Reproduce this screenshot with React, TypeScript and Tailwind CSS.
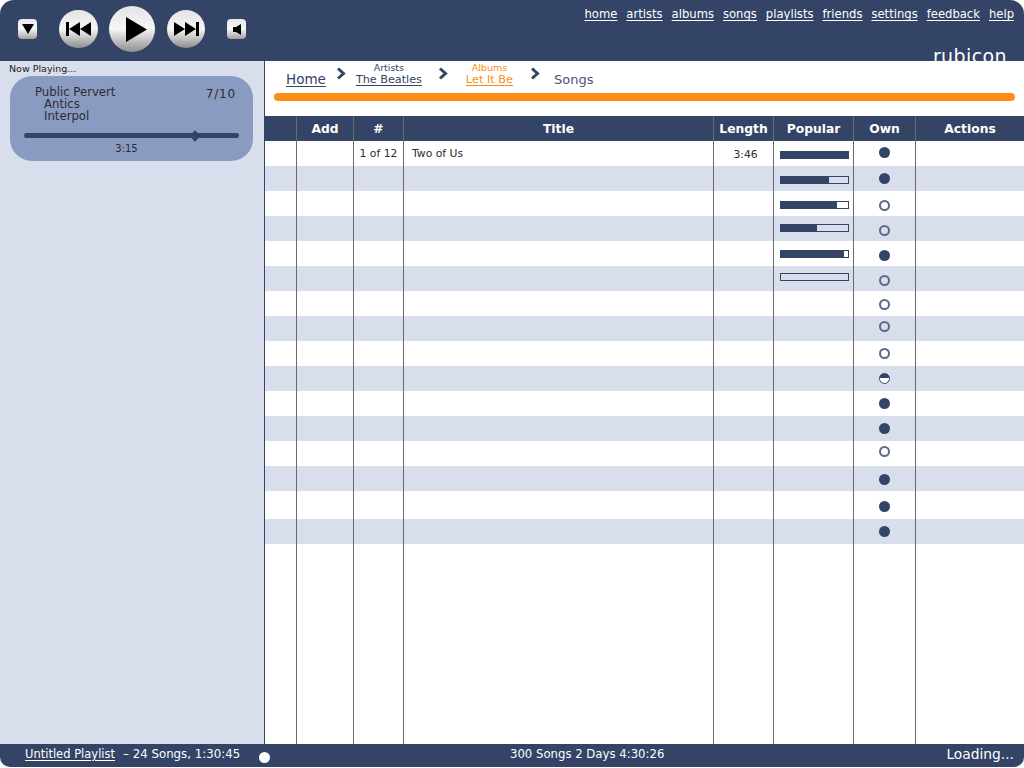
const navLinks = ["home", "artists", "albums", "songs", "playlists", "friends", "settings", "feedback", "help"];

const columns = ["", "Add", "#", "Title", "Length", "Popular", "Own", "Actions"];

const gridCols = "grid grid-cols-[32px_57px_50px_310px_60px_80px_62px_1fr]";

// dot = distance of the dot's top from the top of the row, rows aren't quite even in the original
const rows: { own: "full" | "empty" | "half"; dot: number; bar?: number; barTop?: number; h?: number }[] = [
  { own: "full", dot: 6, bar: 69, barTop: 10 },
  { own: "full", dot: 7, bar: 48, barTop: 10 },
  { own: "empty", dot: 9, bar: 56, barTop: 10 },
  { own: "empty", dot: 9, bar: 36, barTop: 8 },
  { own: "full", dot: 9, bar: 63, barTop: 9 },
  { own: "empty", dot: 9, bar: 0, barTop: 7 },
  { own: "empty", dot: 8 },
  { own: "empty", dot: 5 },
  { own: "empty", dot: 7 },
  { own: "half", dot: 7 },
  { own: "full", dot: 7 },
  { own: "full", dot: 7 },
  { own: "empty", dot: 5 },
  { own: "full", dot: 8 },
  { own: "full", dot: 10, h: 28 },
  { own: "full", dot: 7 },
];

function Circle({ size, children }: { size: string; children: React.ReactNode }) {
  return (
    <div className={`${size} flex items-center justify-center rounded-full bg-gradient-to-b from-[#e4e4e4] via-[#f6f6f6] to-[#8f8f8f]`}>
      {children}
    </div>
  );
}

function Square({ children }: { children: React.ReactNode }) {
  return (
    <div className="w-[19px] h-[20px] flex items-center justify-center rounded-[4px] bg-gradient-to-b from-[#e8e8e8] via-[#f6f6f6] to-[#a0a0a0]">
      {children}
    </div>
  );
}

function Chevron() {
  return (
    <svg width="10" height="13" viewBox="0 0 10 13" className="shrink-0">
      <path d="M2 1.5 L7.5 6.5 L2 11.5" fill="none" stroke="#334466" strokeWidth="3" />
    </svg>
  );
}

function OwnDot({ kind }: { kind: "full" | "empty" | "half" }) {
  if (kind === "full") return <div className="w-[11px] h-[11px] rounded-full bg-[#334466]" />;
  if (kind === "half")
    return <div className="w-[11px] h-[11px] rounded-full border border-[#334466] bg-[linear-gradient(#334466_50%,#ffffff_50%)]" />;
  return <div className="w-[11px] h-[11px] rounded-full border-2 border-[#5b6a8a]" />;
}

export default function App() {
  return (
    <div className="h-screen flex flex-col bg-white pb-[1px] font-['DejaVu_Sans',sans-serif] overflow-hidden">
      <header className="h-[61px] shrink-0 flex bg-[#334466] rounded-t-[14px] overflow-hidden">
        <div className="flex items-center pl-[18px] pb-[3px]">
          <Square>
            <svg width="12" height="10" viewBox="0 0 12 10"><polygon points="0,0 12,0 6,10" fill="#000" /></svg>
          </Square>
          <div className="ml-[22px]">
            <Circle size="w-[39px] h-[38px]">
              <svg width="25" height="14" viewBox="0 0 25 14">
                <rect x="0" y="0" width="3" height="14" />
                <polygon points="3,7 14,0 14,14" />
                <polygon points="14,7 25,0 25,14" />
              </svg>
            </Circle>
          </div>
          <div className="ml-[11px]">
            <Circle size="w-[46px] h-[46px]">
              <svg width="21" height="25" viewBox="0 0 21 25" className="ml-[8px]"><polygon points="0,0 21,12.5 0,25" /></svg>
            </Circle>
          </div>
          <div className="ml-[12px]">
            <Circle size="w-[38px] h-[38px]">
              <svg width="25" height="14" viewBox="0 0 25 14">
                <polygon points="0,0 11,7 0,14" />
                <polygon points="11,0 22,7 11,14" />
                <rect x="22" y="0" width="3" height="14" />
              </svg>
            </Circle>
          </div>
          <div className="ml-[22px]">
            <Square>
              <svg width="8" height="11" viewBox="0 0 8 11"><polygon points="0,3 3,3 8,0 8,11 3,8 0,8" /></svg>
            </Square>
          </div>
        </div>
        <div className="ml-auto flex flex-col items-end pr-[10px] pt-[6px]">
          <nav className="flex gap-[9px] text-[11.6px] leading-[16px] text-white">
            {navLinks.map((link) => (
              <a key={link} className="underline underline-offset-2">{link}</a>
            ))}
          </nav>
          <div className="mt-[22px] pr-[7px] text-[19px] tracking-[0.4px] leading-[24px] text-white">rubicon</div>
        </div>
      </header>

      <div className="flex-1 min-h-0 flex">
        <aside className="w-[265px] shrink-0 bg-[#d8deeb] border-r border-[#334466] pl-[10px] pr-[11px]">
          <div className="ml-[-1px] text-[9.5px] leading-[14px] pt-[1px] text-[#222]">Now Playing...</div>
          <div className="h-[85px] w-[243px] rounded-[22px] bg-[#8a9bc2] px-[14px] pt-[10px] text-[#2c2c2c]">
            <div className="flex justify-between pl-[11px] pr-[3px]">
              <div className="text-[11.7px] leading-[12px]">
                <div>Public Pervert</div>
                <div className="pl-[9px]">Antics</div>
                <div className="pl-[9px]">Interpol</div>
              </div>
              <div className="text-[12px] leading-[12px] tracking-[0.8px] pt-[2px]">7/10</div>
            </div>
            <div className="relative mt-[11px] h-[5px] rounded-full bg-[#334466]">
              <div className="absolute left-[167px] top-[-1.5px] w-[8px] h-[8px] rotate-45 bg-[#334466]" />
            </div>
            <div className="mt-[4px] pr-[10px] text-center text-[10px] leading-[14px]">3:15</div>
          </div>
        </aside>

        <main className="flex-1 min-w-0 flex flex-col">
          <div className="h-[55px] shrink-0 pl-[9px] pr-[9px]">
            <div className="h-[32px] flex pl-[12px] text-[#334466]">
              <a className="mt-[10px] text-[13.5px] leading-[16px] underline underline-offset-2">Home</a>
              <div className="ml-[10px] mt-[6px]"><Chevron /></div>
              <div className="ml-[10px] mt-[1px] flex flex-col items-center">
                <span className="text-[9.5px] leading-[11px]">Artists</span>
                <a className="text-[11.2px] leading-[14px] underline underline-offset-2">The Beatles</a>
              </div>
              <div className="ml-[16px] mt-[6px]"><Chevron /></div>
              <div className="ml-[18px] mt-[1px] flex flex-col items-center text-[#ff8c14]">
                <span className="text-[9.5px] leading-[11px]">Albums</span>
                <a className="text-[11.3px] leading-[14px] underline underline-offset-2">Let It Be</a>
              </div>
              <div className="ml-[17px] mt-[6px]"><Chevron /></div>
              <span className="ml-[14px] mt-[11px] text-[13px] leading-[16px] text-[#445577]">Songs</span>
            </div>
            <div className="h-[8px] rounded-full bg-[#ff8c14]" />
          </div>

          <div className={`${gridCols} h-[25px] shrink-0 bg-[#334466] text-white`}>
            {columns.map((c, i) => (
              <div key={i} className="flex items-center justify-center pt-[1px] border-r border-[#6b6b6b] last:border-r-0 text-[12.3px] font-bold">
                {c}
              </div>
            ))}
          </div>

          {rows.map((r, i) => (
            <div
              key={i}
              className={`${gridCols} shrink-0 ${r.h ? "h-[28px]" : "h-[25px]"} ${i % 2 === 1 ? "bg-[#d8deeb]" : "bg-white"} text-[10.8px] text-[#2c2c2c]`}
            >
              <div className="border-r border-[#6b6b6b]" />
              <div className="border-r border-[#6b6b6b]" />
              <div className="border-r border-[#6b6b6b] pt-[5px] text-center leading-[16px]">{i === 0 && "1 of 12"}</div>
              <div className="border-r border-[#6b6b6b] pl-[8px] pt-[5px] leading-[16px]">{i === 0 && "Two of Us"}</div>
              <div className="border-r border-[#6b6b6b] pt-[6px] pl-[4px] text-center leading-[16px]">{i === 0 && "3:46"}</div>
              <div className="border-r border-[#6b6b6b] pl-[6px]">
                {r.bar !== undefined && (
                  <div
                    className="w-[69px] h-[8px] border border-[#334466] overflow-hidden"
                    style={{ marginTop: r.barTop }}
                  >
                    <div className="h-full bg-[#334466]" style={{ width: r.bar }} />
                  </div>
                )}
              </div>
              <div className="border-r border-[#6b6b6b] flex justify-center">
                <div style={{ marginTop: r.dot }}>
                  <OwnDot kind={r.own} />
                </div>
              </div>
              <div />
            </div>
          ))}

          <div className={`${gridCols} flex-1`}>
            {columns.slice(0, 7).map((_, i) => (
              <div key={i} className="border-r border-[#6b6b6b]" />
            ))}
          </div>
        </main>
      </div>

      <footer className="h-[23px] shrink-0 flex items-center pb-[2px] bg-[#334466] rounded-b-[10px] text-white">
        <div className="w-[510px] shrink-0 flex items-center pl-[25px]">
          <a className="text-[11.5px] underline underline-offset-2">Untitled Playlist</a>
          <span className="ml-[8px] text-[11.8px]">– 24 Songs, 1:30:45</span>
          <span className="ml-[19px] mt-[5px] w-[11px] h-[11px] rounded-full bg-white" />
        </div>
        <span className="text-[11.7px]">300 Songs 2 Days 4:30:26</span>
        <span className="ml-auto pr-[10px] text-[13.8px]">Loading...</span>
      </footer>
    </div>
  );
}
